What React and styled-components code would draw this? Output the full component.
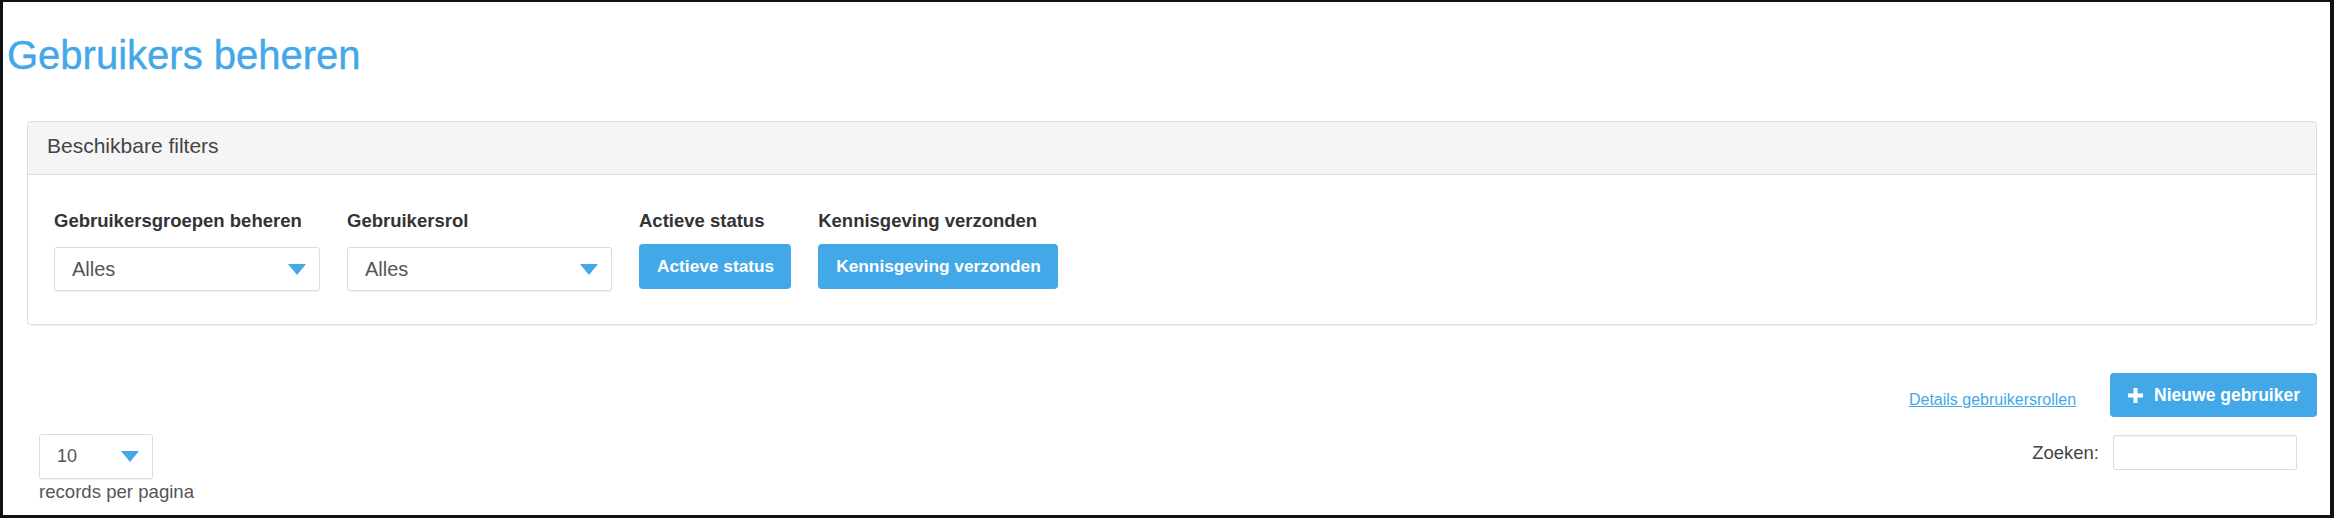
import React from "react";
import styled, { createGlobalStyle } from "styled-components";

const GlobalStyle = createGlobalStyle`
  html, body {
    margin: 0;
    padding: 0;
    background: #fff;
  }
  body {
    font-family: "Liberation Sans", Arial, sans-serif;
  }
`;

const blue = "#42a8e8";

const Frame = styled.div`
  box-sizing: border-box;
  width: 2334px;
  height: 518px;
  border-style: solid;
  border-color: #111;
  border-width: 2px 4px 3px 3px;
  overflow: hidden;
`;

const Title = styled.h1`
  margin: 29px 0 0 4px;
  font-size: 40px;
  line-height: 48px;
  font-weight: 400;
  color: ${blue};
  -webkit-text-stroke: 0.4px ${blue};
`;

const Panel = styled.section`
  margin: 42px 13px 0 24px;
  border: 1px solid #dedede;
  border-radius: 4px;
  box-shadow: 0 1px 1px rgba(0, 0, 0, 0.05);
`;

const PanelHeader = styled.div`
  height: 53px;
  box-sizing: border-box;
  padding: 12px 19px 0;
  background: #f5f5f5;
  border-bottom: 1px solid #dedede;
  border-radius: 4px 4px 0 0;
  font-size: 21px;
  line-height: 24px;
  color: #444;
`;

const PanelBody = styled.div`
  display: flex;
  gap: 27px;
  padding: 35px 26px 33px;
`;

const FilterGroup = styled.div`
  display: flex;
  flex-direction: column;
  align-items: flex-start;
`;

const FilterLabel = styled.div`
  font-size: 18.5px;
  line-height: 22px;
  font-weight: 700;
  color: #333;
  white-space: nowrap;
`;

const SelectBox = styled.div`
  box-sizing: border-box;
  display: flex;
  align-items: center;
  justify-content: space-between;
  width: ${(p) => p.$width}px;
  height: ${(p) => p.$height || 44}px;
  margin-top: ${(p) => (p.$top == null ? 15 : p.$top)}px;
  padding: 0 13px 0 ${(p) => p.$padLeft || 17}px;
  border: 1px solid #dcdcdc;
  border-radius: 3px;
  box-shadow: 0 1px 1px rgba(0, 0, 0, 0.06);
  background: #fff;
  font-size: ${(p) => p.$font || 20}px;
  color: #555;
`;

const BlueButton = styled.button`
  display: inline-flex;
  align-items: center;
  gap: 11px;
  height: ${(p) => p.$height || 45}px;
  margin-top: ${(p) => p.$top || 0}px;
  padding: 0 17px 0 18px;
  border: none;
  border-radius: 4px;
  background: ${blue};
  color: #fff;
  font-family: "Liberation Sans", Arial, sans-serif;
  font-size: ${(p) => p.$font || 17.3}px;
  font-weight: 700;
  white-space: nowrap;
  cursor: pointer;
`;

const Bottom = styled.div`
  padding: 0 13px 0 36px;
`;

const ActionRow = styled.div`
  display: flex;
  justify-content: flex-end;
  align-items: center;
  gap: 34px;
  margin-top: 48px;
`;

const Link = styled.a`
  margin-top: 9px;
  font-size: 16px;
  color: ${blue};
  text-decoration: underline;
  cursor: pointer;
`;

const TableTools = styled.div`
  display: flex;
  justify-content: space-between;
  align-items: flex-start;
  margin-top: 17px;
`;

const Length = styled.div`
  display: flex;
  flex-direction: column;
  gap: 3px;
`;

const SmallText = styled.div`
  font-size: 18.6px;
  line-height: 20px;
  color: #555;
`;

const Search = styled.label`
  display: flex;
  align-items: center;
  gap: 14px;
  margin: 1px 20px 0 0;
  font-size: 18.5px;
  color: #444;
`;

const SearchInput = styled.input`
  box-sizing: border-box;
  width: 184px;
  height: 35px;
  border: 1px solid #dcdcdc;
  border-radius: 2px;
  box-shadow: inset 0 1px 1px rgba(0, 0, 0, 0.05);
`;

const Caret = () => (
  <svg width="18" height="11" viewBox="0 0 18 11">
    <polygon points="0,0 18,0 9,11" fill={blue} />
  </svg>
);

const PlusIcon = () => (
  <svg width="15" height="15" viewBox="0 0 15 15">
    <rect x="5.5" y="0" width="4" height="15" fill="#fff" />
    <rect x="0" y="5.5" width="15" height="4" fill="#fff" />
  </svg>
);

export default function App() {
  return (
    <Frame>
      <GlobalStyle />
      <Title>Gebruikers beheren</Title>

      <Panel>
        <PanelHeader>Beschikbare filters</PanelHeader>
        <PanelBody>
          <FilterGroup>
            <FilterLabel>Gebruikersgroepen beheren</FilterLabel>
            <SelectBox $width={266}>
              Alles
              <Caret />
            </SelectBox>
          </FilterGroup>
          <FilterGroup>
            <FilterLabel>Gebruikersrol</FilterLabel>
            <SelectBox $width={265}>
              Alles
              <Caret />
            </SelectBox>
          </FilterGroup>
          <FilterGroup>
            <FilterLabel>Actieve status</FilterLabel>
            <BlueButton $top={12}>Actieve status</BlueButton>
          </FilterGroup>
          <FilterGroup>
            <FilterLabel>Kennisgeving verzonden</FilterLabel>
            <BlueButton $top={12}>Kennisgeving verzonden</BlueButton>
          </FilterGroup>
        </PanelBody>
      </Panel>

      <Bottom>
        <ActionRow>
          <Link>Details gebruikersrollen</Link>
          <BlueButton $height={44} $font={17.5}>
            <PlusIcon />
            Nieuwe gebruiker
          </BlueButton>
        </ActionRow>
        <TableTools>
          <Length>
            <SelectBox $width={114} $height={45} $top={0} $font={18} $padLeft={17}>
              10
              <Caret />
            </SelectBox>
            <SmallText>records per pagina</SmallText>
          </Length>
          <Search>
            Zoeken:
            <SearchInput type="text" />
          </Search>
        </TableTools>
      </Bottom>
    </Frame>
  );
}
